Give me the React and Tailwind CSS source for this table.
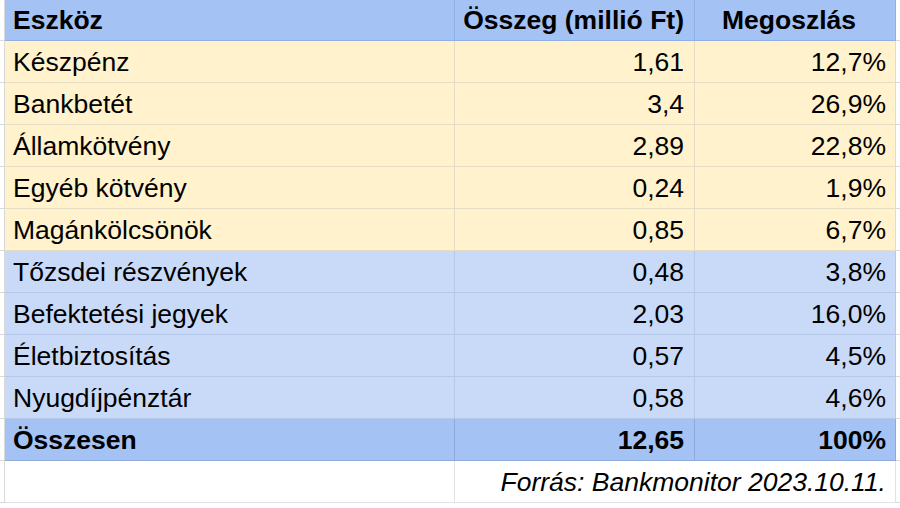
const rows = [
    { name: 'Készpénz', amount: '1,61', share: '12,7%', group: 'cash' },
    { name: 'Bankbetét', amount: '3,4', share: '26,9%', group: 'cash' },
    { name: 'Államkötvény', amount: '2,89', share: '22,8%', group: 'cash' },
    { name: 'Egyéb kötvény', amount: '0,24', share: '1,9%', group: 'cash' },
    { name: 'Magánkölcsönök', amount: '0,85', share: '6,7%', group: 'cash' },
    { name: 'Tőzsdei részvények', amount: '0,48', share: '3,8%', group: 'market' },
    { name: 'Befektetési jegyek', amount: '2,03', share: '16,0%', group: 'market' },
    { name: 'Életbiztosítás', amount: '0,57', share: '4,5%', group: 'market' },
    { name: 'Nyugdíjpénztár', amount: '0,58', share: '4,6%', group: 'market' },
];

const styles = {
    cash: 'bg-[#fff2cc] border-[#e4dcc3]',
    market: 'bg-[#c9daf8] border-[#b5c8ea]',
};

const Row = ({ height, children }) => (
    <div className={`flex ${height}`}>
        <div className="w-[5px] shrink-0 border-r border-b border-[#d9d9d9] bg-white" />
        {children}
        <div className="flex-1 border-b border-[#d9d9d9] bg-white" />
    </div>
);

const App = () => {
    return (
        <div className="w-[900px] h-[508px] overflow-hidden bg-white text-black text-[26.5px] leading-none font-['Liberation_Sans',Arial,sans-serif]">
            <Row height="h-[41px]">
                <div className="w-[450px] shrink-0 flex items-center pl-2 font-bold bg-[#a4c2f4] border-r border-b border-[#8fb0e6]">Eszköz</div>
                <div className="w-[240px] shrink-0 flex items-center justify-end pr-[10px] font-bold bg-[#a4c2f4] border-r border-b border-[#8fb0e6]">Összeg (millió Ft)</div>
                <div className="w-[201px] shrink-0 flex items-center justify-center pr-3 font-bold bg-[#a4c2f4] border-r border-b border-[#8fb0e6]">Megoszlás</div>
            </Row>
            {rows.map((r) => (
                <Row key={r.name} height="h-[42px]">
                    <div className={`w-[450px] shrink-0 flex items-center pl-2 pt-px border-r border-b ${styles[r.group]}`}>{r.name}</div>
                    <div className={`w-[240px] shrink-0 flex items-center justify-end pr-[10px] pt-px border-r border-b ${styles[r.group]}`}>{r.amount}</div>
                    <div className={`w-[201px] shrink-0 flex items-center justify-end pr-[9px] pt-px border-r border-b ${styles[r.group]}`}>{r.share}</div>
                </Row>
            ))}
            <Row height="h-[42px]">
                <div className="w-[450px] shrink-0 flex items-center pl-2 pt-px font-bold bg-[#a4c2f4] border-r border-b border-[#8eaadb]">Összesen</div>
                <div className="w-[240px] shrink-0 flex items-center justify-end pr-[10px] pt-px font-bold bg-[#a4c2f4] border-r border-b border-[#8eaadb]">12,65</div>
                <div className="w-[201px] shrink-0 flex items-center justify-end pr-[9px] pt-px font-bold bg-[#a4c2f4] border-r border-b border-[#8eaadb]">100%</div>
            </Row>
            <Row height="h-[42px]">
                <div className="w-[450px] shrink-0 border-r border-b border-[#e2e2e2]" />
                <div className="w-[441px] shrink-0 flex items-center justify-end pr-[9px] pt-px italic whitespace-nowrap border-r border-b border-[#e2e2e2]">Forrás: Bankmonitor 2023.10.11.</div>
            </Row>
        </div>
    );
};

export default App;
